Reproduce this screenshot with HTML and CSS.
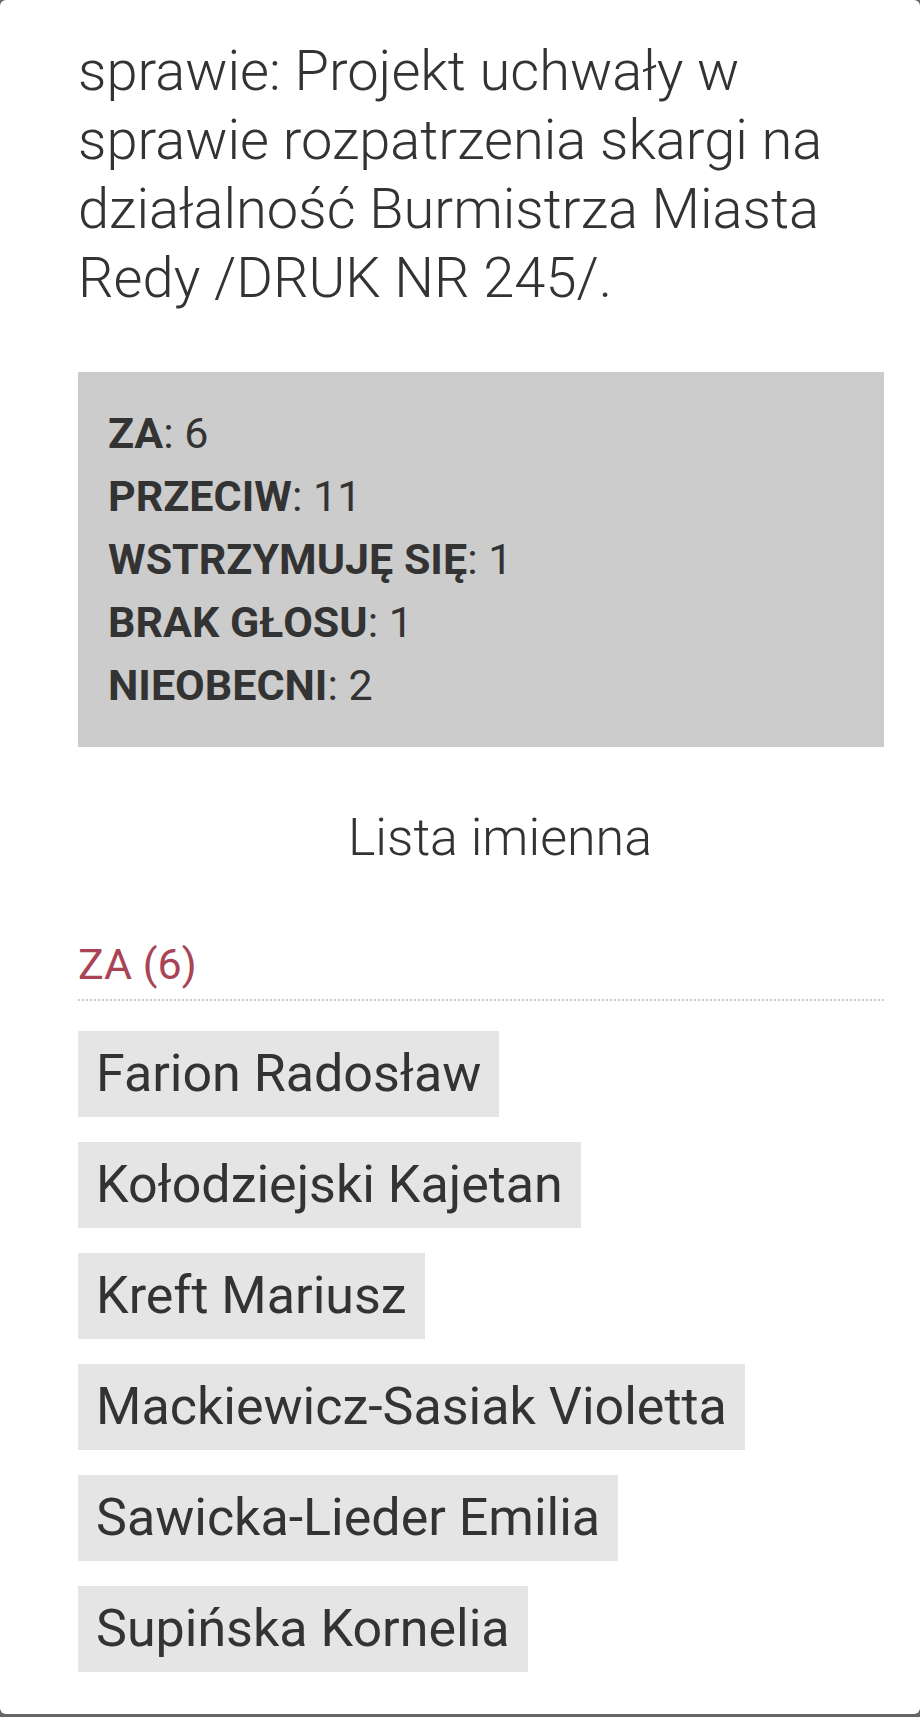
FILE: index.html
```html
<!DOCTYPE html>
<html lang="pl">
<head>
    <meta charset="UTF-8">
    <meta name="viewport" content="width=device-width, initial-scale=1.0">
    <title>Głosowanie - wyniki</title>
    <link rel="stylesheet" href="styles.css">
</head>
<body>
    <div class="panel">
        <h2 class="subject">sprawie: Projekt uchwały w sprawie rozpatrzenia skargi na działalność Burmistrza Miasta Redy /DRUK NR 245/.</h2>

        <div class="results">
            <div><b>ZA</b>: 6</div>
            <div><b>PRZECIW</b>: 11</div>
            <div><b>WSTRZYMUJĘ SIĘ</b>: 1</div>
            <div><b>BRAK GŁOSU</b>: 1</div>
            <div><b>NIEOBECNI</b>: 2</div>
        </div>

        <h3 class="list-title">Lista imienna</h3>

        <div class="vote-group">
            <h4 class="group-title">ZA (6)</h4>
            <ul class="names">
                <li>Farion Radosław</li>
                <li>Kołodziejski Kajetan</li>
                <li>Kreft Mariusz</li>
                <li>Mackiewicz-Sasiak Violetta</li>
                <li>Sawicka-Lieder Emilia</li>
                <li>Supińska Kornelia</li>
            </ul>
        </div>
    </div>
</body>
</html>
```

FILE: styles.css
```css
body {
    margin: 0;
    padding: 0;
    background-color: #666;
    font-family: Roboto, "Liberation Sans", sans-serif;
    color: #333;
}
.panel {
    background: #fff;
    border-radius: 6px;
    padding: 37px 36px 42px 78px;
}
.subject {
    margin: 0 0 59px;
    font-size: 56px;
    line-height: 69px;
    font-weight: 300;
}
.results {
    background-color: #ccc;
    padding: 30px 30px;
    font-size: 43px;
    line-height: 63px;
}
.results b {
    font-weight: 700;
}
.list-title {
    margin: 60px 0 0;
    padding-left: 38px;
    text-align: center;
    font-size: 52px;
    line-height: 62px;
    font-weight: 300;
}
.vote-group {
    margin-top: 70px;
}
.group-title {
    margin: 0;
    padding-bottom: 10px;
    border-bottom: 2px dotted #ccc;
    color: #a94456;
    font-size: 43px;
    line-height: 50px;
    font-weight: 400;
}
.names {
    list-style: none;
    margin: 30px 0 0;
    padding: 0;
}
.names li {
    display: table;
    margin-bottom: 25px;
    padding: 8px 18px;
    background-color: #e5e5e5;
    font-size: 52px;
    line-height: 70px;
}
.names li:last-child {
    margin-bottom: 0;
}
```
